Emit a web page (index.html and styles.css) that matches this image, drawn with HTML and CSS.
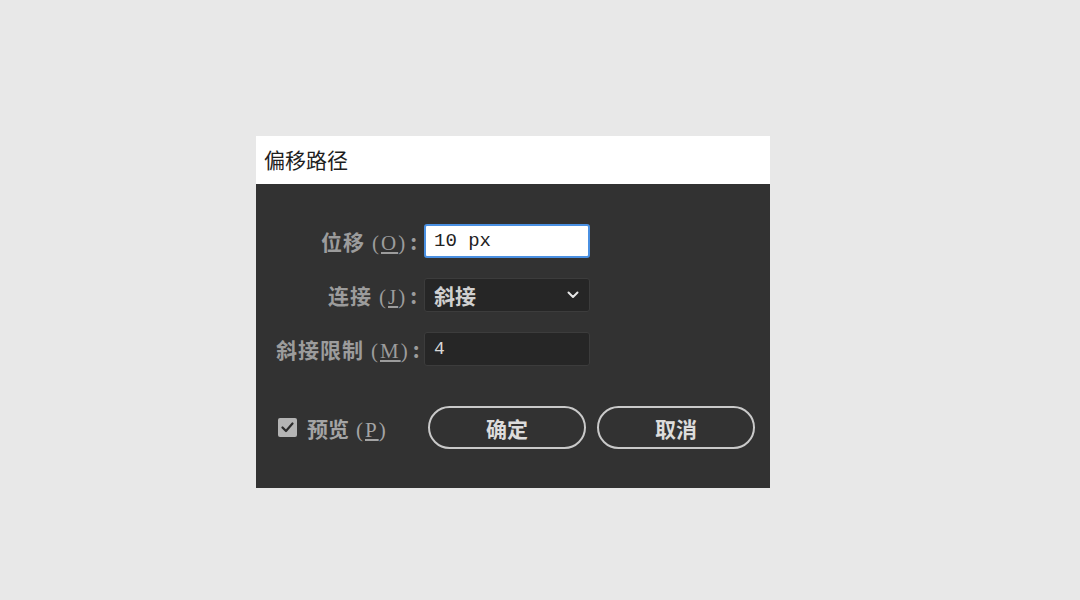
FILE: index.html
```html
<!DOCTYPE html>
<html lang="zh">
    <head>
        <meta charset="UTF-8">
        <title>偏移路径</title>
        <link rel="stylesheet" href="styles.css">
    </head>
    <body>
        <div class="dialog">
            <div class="title">偏移路径</div>

            <div class="body">
                <div class="form">
                    <label class="label">位移<span class="key">(<u>O</u>)</span>:</label>
                    <div class="field active">10 px</div>

                    <label class="label">连接<span class="key">(<u>J</u>)</span>:</label>
                    <div class="field select">
                        <span>斜接</span>
                        <svg class="chevron" width="12" height="8" viewBox="0 0 12 8">
                            <path d="M1.5 1.5 L6 6 L10.5 1.5" fill="none" stroke="#e6e6e6" stroke-width="2" stroke-linecap="round" stroke-linejoin="round"/>
                        </svg>
                    </div>

                    <label class="label">斜接限制<span class="key">(<u>M</u>)</span>:</label>
                    <div class="field mono">4</div>
                </div>

                <div class="footer">
                    <div class="preview">
                        <span class="check">
                            <svg width="13" height="11" viewBox="0 0 13 11">
                                <path d="M1.5 5.5 L5 9 L11.5 1.5" fill="none" stroke="#2b2b2b" stroke-width="2.2" stroke-linecap="round" stroke-linejoin="round"/>
                            </svg>
                        </span>
                        <span>预览<span class="key">(<u>P</u>)</span></span>
                    </div>
                    <button class="btn">确定</button>
                    <button class="btn">取消</button>
                </div>
            </div>
        </div>
    </body>
</html>
```

FILE: styles.css
```css
body{
    margin: 0;
    background: #e8e8e8;
    font-family: "Noto Sans CJK SC", sans-serif;
}
.dialog{
    width: 514px;
    margin: 136px 0 0 256px;
}
.title{
    background: #fff;
    height: 48px;
    line-height: 46px;
    padding-left: 8px;
    font-size: 21px;
    color: #1e1e1e;
}
.body{
    background: #323232;
    padding: 40px 0 39px 20px;
    height: 225px;
}
.form{
    display: grid;
    grid-template-columns: 142px 166px;
    grid-auto-rows: 34px;
    column-gap: 6px;
    row-gap: 20px;
}
.label{
    height: 34px;
    text-align: right;
    color: #9c9c9c;
    font-size: 21px;
    font-weight: 700;
    letter-spacing: 1px;
    line-height: 34px;
    white-space: nowrap;
}
.key{
    font-family: "Liberation Serif", serif;
    font-weight: 400;
    letter-spacing: 2px;
    margin: 0 3px 0 7px;
}
.field{
    height: 34px;
    box-sizing: border-box;
    background: #262626;
    border: 1px solid #3c3c3c;
    border-radius: 3px;
    padding-left: 9px;
    line-height: 32px;
    color: #d8d8d8;
    font-size: 19px;
}
.active{
    background: #fff;
    border: 2px solid #4a90e2;
    color: #222;
    font-family: "Liberation Mono", monospace;
    line-height: 30px;
    padding-left: 8px;
}
.mono{
    font-family: "Liberation Mono", monospace;
    font-size: 18px;
}
.select{
    display: flex;
    align-items: center;
    justify-content: space-between;
    padding-right: 10px;
    font-size: 21px;
    font-weight: 700;
    color: #d0d0d0;
}
.footer{
    display: flex;
    align-items: center;
    margin-top: 40px;
}
.preview{
    display: flex;
    align-items: center;
    gap: 10px;
    width: 150px;
    margin-left: 2px;
    color: #a4a4a4;
    font-size: 21px;
    font-weight: 700;
}
.check{
    width: 19px;
    height: 19px;
    border-radius: 2px;
    background: #b4b4b4;
    display: flex;
    align-items: center;
    justify-content: center;
}
.btn{
    width: 158px;
    height: 43px;
    border: 2px solid #c9c9c9;
    border-radius: 22px;
    background: transparent;
    color: #dcdcdc;
    font-family: "Noto Sans CJK SC", sans-serif;
    font-size: 21px;
    font-weight: 700;
    margin-right: 11px;
}
```
